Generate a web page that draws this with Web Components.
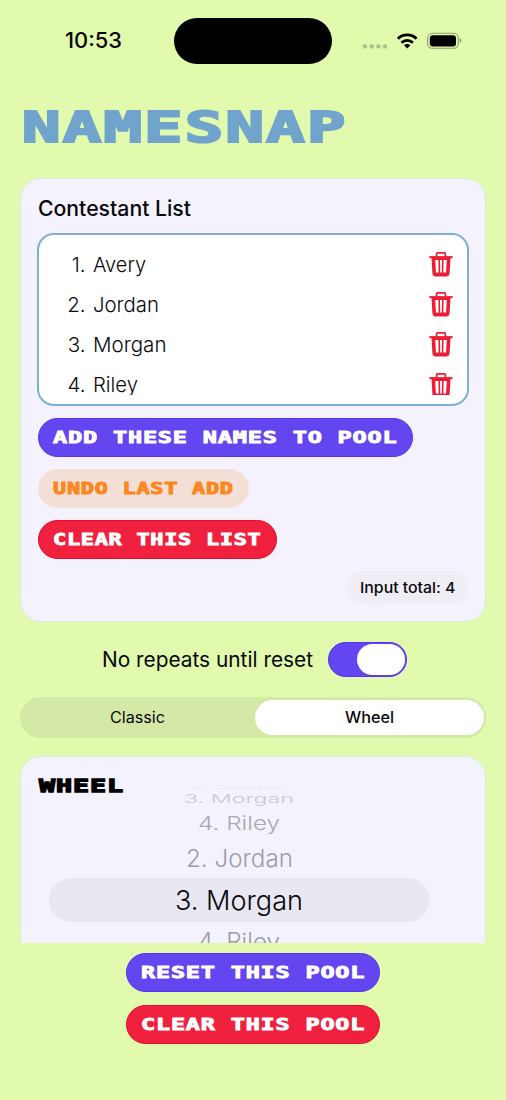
<!DOCTYPE html>
<html lang="en">
<head>
<meta charset="utf-8">
<title>NameSnap</title>
<style>
html,body{margin:0;padding:0;background:#e1faad}
body{font-family:Inter,"Liberation Sans",sans-serif;font-optical-sizing:none;color:#08080c}
</style>
</head>
<body>
<name-snap></name-snap>
<script>
function define(name, html, init){
  const t = document.createElement('template');
  t.innerHTML = html;
  customElements.define(name, class extends HTMLElement{
    connectedCallback(){
      if(this.shadowRoot) return;
      this.attachShadow({mode:'open'}).appendChild(t.content.cloneNode(true));
      if(init) init(this, this.shadowRoot);
    }
  });
}

/* Text set to a given width; sy squashes it vertically. */
define('fit-text', `<style>
:host{display:inline-block;white-space:nowrap;text-align:left}
span{display:inline-block;white-space:nowrap;transform-origin:0 50%}
</style><span><slot></slot></span>`, (el, root) => {
  const s = root.querySelector('span');
  const w = +el.getAttribute('w'), sy = +el.getAttribute('sy') || 1;
  const nat = s.getBoundingClientRect().width;
  el.style.width = w + 'px';
  s.style.transform = 'scale(' + (w / nat) + ',' + sy + ')';
});

/* Wide, heavy fixed-pitch lettering. */
define('display-text', `<style>
:host{display:block;overflow:visible;white-space:pre;font-family:"DejaVu Sans Mono",monospace;font-weight:700}
span{display:inline-block;transform-origin:0 50%;white-space:pre;letter-spacing:.035em;-webkit-text-stroke:var(--stroke,.8px) currentColor;paint-order:stroke fill}
</style><span><slot></slot></span>`, (el, root) => {
  const s = root.querySelector('span');
  const w = +el.getAttribute('pitch') * el.textContent.length;
  const nat = s.getBoundingClientRect().width;
  el.style.width = w + 'px';
  s.style.transform = 'scaleX(' + (w / nat) + ')';
});

define('status-bar', `<style>
:host{display:grid;grid-template-columns:174px 158px 1fr;height:82px;box-sizing:border-box;padding-top:18px}
.time{font-size:21px;font-weight:500;line-height:46px;padding-left:65px}
.island{height:45.5px;border-radius:23px;background:#000}
svg{display:block;width:174px;height:46px}
</style>
<div class="time"><fit-text w="57">10:53</fit-text></div>
<div class="island"></div>
<svg viewBox="332 18 174 46">
<g fill="#adc188"><circle cx="365" cy="46.4" r="2.2"/><circle cx="371.7" cy="46.4" r="2.2"/><circle cx="378.4" cy="46.4" r="2.2"/><circle cx="385.1" cy="46.4" r="2.2"/></g>
<g fill="none" stroke="#000" stroke-width="2.9"><path d="M397.9 38.7a13.3 13.3 0 0 1 18.6 0"/><path d="M401.5 42.7a8.2 8.2 0 0 1 11.4 0"/></g>
<path d="M407.2 48.4l-3.2-3.2a4.6 4.6 0 0 1 6.4 0z"/>
<rect x="427.7" y="33.3" width="30.6" height="15" rx="4.6" fill="none" stroke="#8b9b6d" stroke-width="1.1"/>
<rect x="429.8" y="35.2" width="26.2" height="11.2" rx="3"/>
<path d="M459.7 38.6q1.7.6 1.7 2.2t-1.7 2.2z" fill="#8b9b6d"/>
</svg>`);

define('trash-icon', `<style>:host{display:block;width:24px;height:26px}svg{display:block}</style>
<svg width="24" height="26" viewBox="0 0 24 26"><g fill="none" stroke="#ee1c34">
<path d="M.4 6.1h23.2" stroke-width="2"/>
<path d="M7.5 5.5V3.2q0-1.3 1.3-1.3h6.4q1.3 0 1.3 1.3v2.3" stroke-width="1.7"/>
<path d="M4.3 6.8l.9 15.4q.1 1.4 1.4 1.4h10.8q1.3 0 1.4-1.4l.9-15.4" stroke-width="3.6"/>
<path d="M10.2 7.5l.2 14.5M13.8 7.5l-.2 14.5" stroke-width="1.6"/>
<path d="M5 7.7h14M6 22.9h12" stroke-width="2.4"/></g></svg>`);

define('contestant-row', `<style>
:host{display:flex;align-items:center;height:40.2px;font-size:20.5px;font-weight:320;flex:none;box-sizing:border-box;padding:0 14px 0 0}
.n{width:46.5px;text-align:right;margin-right:7.5px}.name{flex:1}
.n,.name{margin-top:-2px}
trash-icon{margin-top:-2px}
</style><span class="n"><slot name="n"></slot></span><span class="name"><slot></slot></span><trash-icon></trash-icon>`);

define('pill-button', `<style>
:host{display:flex;align-items:center;box-sizing:border-box;width:fit-content;padding:1px 14px 0;border-radius:20px;height:var(--h,39px);background:var(--bg);border:1px solid var(--edge);color:var(--fg,#fff);font-size:16.2px;--stroke:.9px;line-height:20px}
:host([kind=primary]){--bg:#6446f0;--edge:#5433ee}
:host([kind=danger]){--bg:#ef213e;--edge:#e60c2c}
:host([kind=soft]){--bg:#f4dfd6;--edge:#f4e2da;--fg:#fb8721}
</style><slot></slot>`);

define('panel-card', `<style>
:host{display:block;box-sizing:border-box;margin:0 20px;width:465.5px;background:#f4f2fd;border-radius:21px;border:1px solid #dfe8e6}
</style><slot></slot>`);

define('toggle-switch', `<style>
:host{display:flex;justify-content:flex-end;box-sizing:border-box;width:79.5px;height:35.5px;border-radius:18px;background:#6446f0;border:1px solid #5233ef;padding:1.2px}
i{display:block;width:47.5px;border-radius:16px;background:#fff}
</style><i></i>`);

define('segmented-control', `<style>
:host{display:grid;grid-template-columns:233px 1fr;box-sizing:border-box;margin:0 20px;width:466px;height:40.5px;padding:2.5px 2px;border-radius:21px;background:#d5e9a7;font-size:15.8px;line-height:35.5px;text-align:center}
.sel{background:#fff;border-radius:18px;font-weight:450}
div:first-of-type{padding-right:3px}
</style><div><slot name="a"></slot></div><div class="sel"><slot name="b"></slot></div>`);

define('wheel-picker', `<style>
:host{display:flex;flex-direction:column;width:380px;text-align:center;font-size:27.5px;font-weight:320}
div{display:flex;align-items:center;justify-content:center;flex:none;line-height:32px}
.r0{height:4px;color:#eae8f2}
.r1{height:17px;color:#cbc9d3}
.r2{height:31px;color:#aaa8b1}
.r3{height:39.5px;color:#9e9ca5}
.r4{height:44.5px;background:#e9e7f1;border-radius:22.5px}
.r5{height:38px;color:#9e9ca5}
</style>
<div class="r0"><fit-text w="98" sy=".14">2. Jordan</fit-text></div>
<div class="r1"><fit-text w="110" sy=".42">3. Morgan</fit-text></div>
<div class="r2"><fit-text w="82" sy=".68">4. Riley</fit-text></div>
<div class="r3"><fit-text w="107" sy=".88">2. Jordan</fit-text></div>
<div class="r4"><fit-text w="128">3. Morgan</fit-text></div>
<div class="r5"><fit-text w="82" sy=".86">4. Riley</fit-text></div>`);

define('name-snap', `<style>
:host{display:flex;flex-direction:column;width:506px;height:1100px;overflow:hidden;background:#e1faad}
.brand{height:96px;padding-left:22px;box-sizing:border-box;padding-top:18px;color:#71a4cd;font-size:43px;line-height:54px;--stroke:2.2px}
.one{height:443.5px;padding:14px 16px 0;flex:none}
h2{margin:0 0 0 1px;font-size:20.8px;font-weight:500;line-height:32px;height:39.5px}
.list{box-sizing:border-box;width:432px;height:173px;border:2px solid #7fafd4;border-radius:17px;background:#fff;padding:10.5px 0 0}
.scroll{height:149.5px;overflow:hidden;display:flex;flex-direction:column}
.actions{display:flex;flex-direction:column;gap:12.3px;margin:12px 0 0 1px}
.total{margin:12px 0 0 310px;width:121px;height:33px;border-radius:17px;background:#efeef4;text-align:center;font-size:14.8px;font-weight:500;line-height:34px}
.repeat{display:flex;align-items:center;height:36px;margin:20px 0 19.5px 102px;gap:15px;font-size:20.8px;flex:none}
.repeat toggle-switch{margin-left:-.5px}
.view{height:187px;margin-top:18.5px;overflow:hidden;flex:none}
.two{height:260px}
.two display-text{color:#000;font-size:18.5px;line-height:22px;--stroke:1.3px;height:22px;padding:18px 0 0 17.5px}
wheel-picker{margin:-11px 0 0 28px}
.foot{display:flex;flex-direction:column;align-items:center;gap:13px;margin-top:9.5px}
</style>
<status-bar></status-bar>
<div class="brand"><display-text pitch="40.7">NAMESNAP</display-text></div>
<panel-card class="one">
<h2><fit-text w="153">Contestant List</fit-text></h2>
<div class="list"><div class="scroll">
<contestant-row><span slot="n">1.</span><fit-text w="53">Avery</fit-text></contestant-row>
<contestant-row><span slot="n">2.</span><fit-text w="66">Jordan</fit-text></contestant-row>
<contestant-row><span slot="n">3.</span><fit-text w="73.5">Morgan</fit-text></contestant-row>
<contestant-row><span slot="n">4.</span><fit-text w="45">Riley</fit-text></contestant-row>
</div></div>
<div class="actions">
<pill-button kind="primary" style="--h:39.5px"><display-text pitch="14.98">ADD THESE NAMES TO POOL</display-text></pill-button>
<pill-button kind="soft" style="--h:38.5px;font-size:15px"><display-text pitch="13.9">UNDO LAST ADD</display-text></pill-button>
<pill-button kind="danger" style="--h:38.5px;font-size:15.8px"><display-text pitch="13.9">CLEAR THIS LIST</display-text></pill-button>
</div>
<div class="total"><fit-text w="95.5">Input total: 4</fit-text></div>
</panel-card>
<div class="repeat"><fit-text w="211">No repeats until reset</fit-text><toggle-switch></toggle-switch></div>
<segmented-control><fit-text slot="a" w="55">Classic</fit-text><fit-text slot="b" w="49">Wheel</fit-text></segmented-control>
<div class="view"><panel-card class="two">
<display-text pitch="17">WHEEL</display-text>
<wheel-picker></wheel-picker>
</panel-card></div>
<div class="foot">
<pill-button kind="primary"><display-text pitch="14.95">RESET THIS POOL</display-text></pill-button>
<pill-button kind="danger"><display-text pitch="14.95">CLEAR THIS POOL</display-text></pill-button>
</div>`);
</script>
</body>
</html>
